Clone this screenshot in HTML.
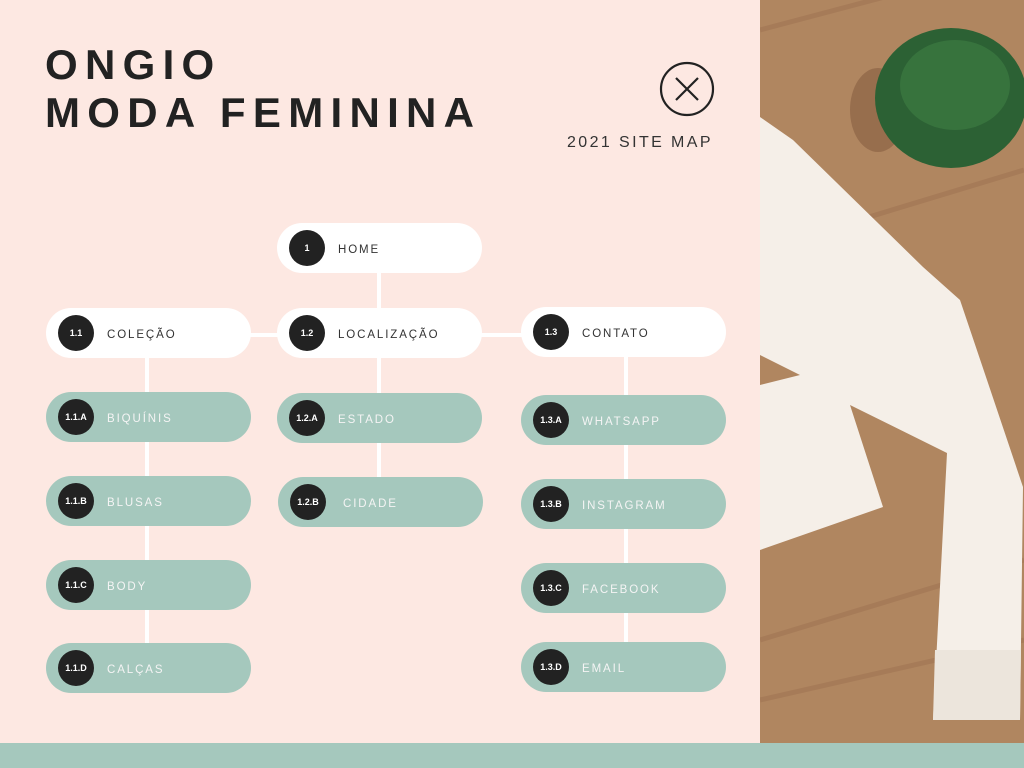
<!DOCTYPE html>
<html><head><meta charset="utf-8"><style>
*{margin:0;padding:0;box-sizing:border-box}
body{width:1024px;height:768px;overflow:hidden;background:#fde8e2;position:relative;font-family:"Liberation Sans",sans-serif;}
.t{position:absolute;left:45px;font-weight:bold;font-size:42px;letter-spacing:7.3px;color:#222;line-height:1}
.pill{position:absolute;width:205px;height:50px;border-radius:25px;background:#fff}
.g{background:#a5c8bd}
.pill .n{position:absolute;left:12px;top:7px;width:36px;height:36px;border-radius:50%;background:#222;color:#fff;font-size:9px;font-weight:bold;display:flex;align-items:center;justify-content:center}
.pill .l{position:absolute;left:61px;top:2px;line-height:50px;font-size:11.5px;letter-spacing:1.9px;color:#333}
.g .l{color:#f4f4f4}
.v{position:absolute;width:4px;background:#fff}
.h{position:absolute;height:4px;background:#fff}
</style></head><body>
<div class="t" style="top:44px">ONGIO</div>
<div class="t" style="top:92px">MODA FEMININA</div>
<svg style="position:absolute;left:658px;top:61px" width="58" height="58"><circle cx="29" cy="28" r="26" fill="none" stroke="#222" stroke-width="2.2"/><path d="M18 17L40 39M40 17L18 39" stroke="#222" stroke-width="2.2"/></svg>
<div style="position:absolute;left:567px;top:134px;font-size:16px;letter-spacing:2.4px;color:#333">2021 SITE MAP</div>

<div class="v" style="left:145px;top:356px;height:290px"></div>
<div class="v" style="left:377px;top:270px;height:210px"></div>
<div class="v" style="left:624px;top:355px;height:290px"></div>
<div class="h" style="left:250px;top:333px;width:30px"></div>
<div class="h" style="left:480px;top:333px;width:44px"></div>

<div class="pill" style="left:277px;top:223px"><div class="n">1</div><div class="l">HOME</div></div>
<div class="pill" style="left:46px;top:308px"><div class="n">1.1</div><div class="l">COLEÇÃO</div></div>
<div class="pill" style="left:277px;top:308px"><div class="n">1.2</div><div class="l">LOCALIZAÇÃO</div></div>
<div class="pill" style="left:521px;top:307px"><div class="n">1.3</div><div class="l">CONTATO</div></div>

<div class="pill g" style="left:46px;top:392px"><div class="n">1.1.A</div><div class="l">BIQUÍNIS</div></div>
<div class="pill g" style="left:46px;top:476px"><div class="n">1.1.B</div><div class="l">BLUSAS</div></div>
<div class="pill g" style="left:46px;top:560px"><div class="n">1.1.C</div><div class="l">BODY</div></div>
<div class="pill g" style="left:46px;top:643px"><div class="n">1.1.D</div><div class="l">CALÇAS</div></div>

<div class="pill g" style="left:277px;top:393px"><div class="n">1.2.A</div><div class="l">ESTADO</div></div>
<div class="pill g" style="left:278px;top:477px"><div class="n">1.2.B</div><div class="l" style="left:65px">CIDADE</div></div>

<div class="pill g" style="left:521px;top:395px"><div class="n">1.3.A</div><div class="l">WHATSAPP</div></div>
<div class="pill g" style="left:521px;top:479px"><div class="n">1.3.B</div><div class="l">INSTAGRAM</div></div>
<div class="pill g" style="left:521px;top:563px"><div class="n">1.3.C</div><div class="l">FACEBOOK</div></div>
<div class="pill g" style="left:521px;top:642px"><div class="n">1.3.D</div><div class="l">EMAIL</div></div>

<svg style="position:absolute;left:760px;top:0" width="264" height="743" viewBox="760 0 264 743">
<rect x="760" y="0" width="264" height="743" fill="#b08660"/>
<path d="M760 30L1024 -40M760 250L1024 170M760 640L1024 560M760 700L1024 640" stroke="#96694a" stroke-width="5" opacity=".35"/>
<ellipse cx="878" cy="110" rx="28" ry="42" fill="#8d6446" opacity=".7"/>
<ellipse cx="951" cy="98" rx="76" ry="70" fill="#2c6134"/>
<ellipse cx="955" cy="85" rx="55" ry="45" fill="#3f7f45" opacity=".6"/>
<polygon fill="#f5efe8" points="760,117 793,140 923,267 960,300 987,380 1023,487 1020,720 933,720 947,453 850,405 883,507 760,550 760,385 800,375 760,355"/>
<polygon fill="#ece5dc" points="935,650 1021,650 1020,720 933,720"/>
</svg>
<div style="position:absolute;left:0;top:743px;width:1024px;height:25px;background:#a5c8bd"></div>
</body></html>
